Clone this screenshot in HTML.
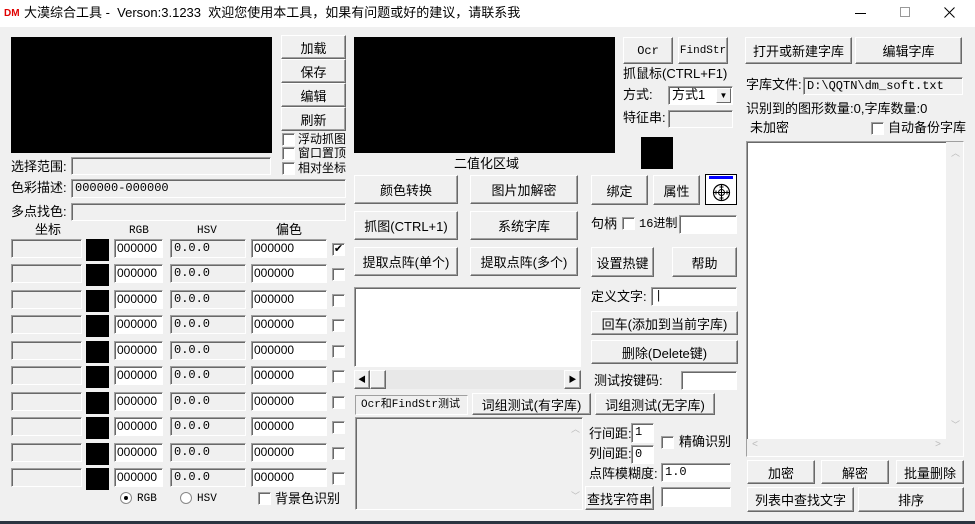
<!DOCTYPE html>
<html><head><meta charset="utf-8">
<style>
*{box-sizing:border-box;margin:0;padding:0}
body{width:975px;height:524px;background:#f0f0f0;position:relative;overflow:hidden;font-family:"Liberation Sans","Noto Sans CJK SC",sans-serif;font-size:12px;color:#000}
.a{position:absolute}
.blk{position:absolute;background:#000}
.btn{position:absolute;background:#f0f0f0;border:1px solid;border-color:#fff #696969 #696969 #fff;box-shadow:inset -1px -1px 0 #a0a0a0;display:flex;align-items:center;justify-content:center;font-size:13px;white-space:nowrap}
.in{position:absolute;background:#fff;border:1px solid;border-color:#a0a0a0 #fff #fff #a0a0a0;box-shadow:inset 1px 1px 0 #696969;font-family:"Liberation Mono","Noto Sans CJK SC",monospace;font-size:12px;line-height:16px;padding-left:3px;white-space:nowrap;overflow:hidden}
.s{font-family:"Liberation Sans",sans-serif;font-size:12px;padding-left:2px}
.ro{background:#f0f0f0}
.cb{position:absolute;width:13px;height:13px;background:#fff;border:1px solid;border-color:#a0a0a0 #fff #fff #a0a0a0;box-shadow:inset 1px 1px 0 #696969}
.t{position:absolute;font-size:13px;white-space:nowrap;line-height:14px}
.m{font-family:"Liberation Mono","Noto Sans CJK SC",monospace;font-size:12px}
</style></head><body>
<div class="a" style="left:0;top:0;width:975px;height:27px;background:#fff"></div>
<div class="t" style="left:4px;top:7px;color:#e00000;font-weight:bold;font-size:10px">DM</div>
<div class="t" style="left:24px;top:6px;font-size:13px">大漠综合工具 -&nbsp; Verson:3.1233&nbsp; 欢迎您使用本工具，如果有问题或好的建议，请联系我</div>
<div class="a" style="left:855px;top:13px;width:11px;height:1px;background:#000"></div>
<div class="a" style="left:900px;top:7px;width:10px;height:10px;border:1px solid #999"></div>
<svg class="a" style="left:944px;top:7px" width="11" height="11" viewBox="0 0 11 11"><path d="M0.5 0.5L10.5 10.5M10.5 0.5L0.5 10.5" stroke="#000" stroke-width="1"/></svg>
<div class="a" style="left:0;top:521px;width:975px;height:3px;background:#2b3440"></div>

<div class="blk" style="left:11px;top:37px;width:261px;height:116px"></div>
<div class="btn" style="left:281px;top:35px;width:65px;height:24px">加载</div>
<div class="btn" style="left:281px;top:59px;width:65px;height:24px">保存</div>
<div class="btn" style="left:281px;top:83px;width:65px;height:24px">编辑</div>
<div class="btn" style="left:281px;top:107px;width:65px;height:24px">刷新</div>
<div class="cb" style="left:282px;top:133px"></div><div class="t" style="left:298px;top:132px;font-size:12px">浮动抓图</div>
<div class="cb" style="left:282px;top:147px"></div><div class="t" style="left:298px;top:146px;font-size:12px">窗口置顶</div>
<div class="cb" style="left:282px;top:162px"></div><div class="t" style="left:298px;top:161px;font-size:12px">相对坐标</div>
<div class="t" style="left:11px;top:160px">选择范围:</div>
<div class="in ro" style="left:71px;top:157px;width:200px;height:18px"></div>
<div class="t" style="left:11px;top:181px">色彩描述:</div>
<div class="in ro" style="left:71px;top:179px;width:275px;height:19px">000000-000000</div>
<div class="t" style="left:11px;top:205px">多点找色:</div>
<div class="in ro" style="left:71px;top:203px;width:275px;height:18px"></div>
<div class="t" style="left:35px;top:223px">坐标</div>
<div class="t m" style="left:129px;top:224px;font-size:11px">RGB</div>
<div class="t m" style="left:197px;top:224px;font-size:11px">HSV</div>
<div class="t" style="left:276px;top:223px">偏色</div>

<div class="in ro" style="left:11px;top:239px;width:71px;height:19px"></div><div class="blk" style="left:86px;top:239px;width:23px;height:22px"></div><div class="in s" style="left:114px;top:239px;width:49px;height:19px">000000</div><div class="in ro" style="left:170px;top:239px;width:76px;height:19px">0.0.0</div><div class="in s" style="left:251px;top:239px;width:76px;height:19px">000000</div><div class="cb" style="left:332px;top:243px;font-size:11px;line-height:11px;text-align:center">✔</div>
<div class="in ro" style="left:11px;top:264px;width:71px;height:19px"></div><div class="blk" style="left:86px;top:264px;width:23px;height:22px"></div><div class="in s" style="left:114px;top:264px;width:49px;height:19px">000000</div><div class="in ro" style="left:170px;top:264px;width:76px;height:19px">0.0.0</div><div class="in s" style="left:251px;top:264px;width:76px;height:19px">000000</div><div class="cb" style="left:332px;top:268px"></div>
<div class="in ro" style="left:11px;top:290px;width:71px;height:19px"></div><div class="blk" style="left:86px;top:290px;width:23px;height:22px"></div><div class="in s" style="left:114px;top:290px;width:49px;height:19px">000000</div><div class="in ro" style="left:170px;top:290px;width:76px;height:19px">0.0.0</div><div class="in s" style="left:251px;top:290px;width:76px;height:19px">000000</div><div class="cb" style="left:332px;top:294px"></div>
<div class="in ro" style="left:11px;top:315px;width:71px;height:19px"></div><div class="blk" style="left:86px;top:315px;width:23px;height:22px"></div><div class="in s" style="left:114px;top:315px;width:49px;height:19px">000000</div><div class="in ro" style="left:170px;top:315px;width:76px;height:19px">0.0.0</div><div class="in s" style="left:251px;top:315px;width:76px;height:19px">000000</div><div class="cb" style="left:332px;top:319px"></div>
<div class="in ro" style="left:11px;top:341px;width:71px;height:19px"></div><div class="blk" style="left:86px;top:341px;width:23px;height:22px"></div><div class="in s" style="left:114px;top:341px;width:49px;height:19px">000000</div><div class="in ro" style="left:170px;top:341px;width:76px;height:19px">0.0.0</div><div class="in s" style="left:251px;top:341px;width:76px;height:19px">000000</div><div class="cb" style="left:332px;top:345px"></div>
<div class="in ro" style="left:11px;top:366px;width:71px;height:19px"></div><div class="blk" style="left:86px;top:366px;width:23px;height:22px"></div><div class="in s" style="left:114px;top:366px;width:49px;height:19px">000000</div><div class="in ro" style="left:170px;top:366px;width:76px;height:19px">0.0.0</div><div class="in s" style="left:251px;top:366px;width:76px;height:19px">000000</div><div class="cb" style="left:332px;top:370px"></div>
<div class="in ro" style="left:11px;top:392px;width:71px;height:19px"></div><div class="blk" style="left:86px;top:392px;width:23px;height:22px"></div><div class="in s" style="left:114px;top:392px;width:49px;height:19px">000000</div><div class="in ro" style="left:170px;top:392px;width:76px;height:19px">0.0.0</div><div class="in s" style="left:251px;top:392px;width:76px;height:19px">000000</div><div class="cb" style="left:332px;top:396px"></div>
<div class="in ro" style="left:11px;top:417px;width:71px;height:19px"></div><div class="blk" style="left:86px;top:417px;width:23px;height:22px"></div><div class="in s" style="left:114px;top:417px;width:49px;height:19px">000000</div><div class="in ro" style="left:170px;top:417px;width:76px;height:19px">0.0.0</div><div class="in s" style="left:251px;top:417px;width:76px;height:19px">000000</div><div class="cb" style="left:332px;top:421px"></div>
<div class="in ro" style="left:11px;top:443px;width:71px;height:19px"></div><div class="blk" style="left:86px;top:443px;width:23px;height:22px"></div><div class="in s" style="left:114px;top:443px;width:49px;height:19px">000000</div><div class="in ro" style="left:170px;top:443px;width:76px;height:19px">0.0.0</div><div class="in s" style="left:251px;top:443px;width:76px;height:19px">000000</div><div class="cb" style="left:332px;top:447px"></div>
<div class="in ro" style="left:11px;top:468px;width:71px;height:19px"></div><div class="blk" style="left:86px;top:468px;width:23px;height:22px"></div><div class="in s" style="left:114px;top:468px;width:49px;height:19px">000000</div><div class="in ro" style="left:170px;top:468px;width:76px;height:19px">0.0.0</div><div class="in s" style="left:251px;top:468px;width:76px;height:19px">000000</div><div class="cb" style="left:332px;top:472px"></div>
<div class="a" style="left:120px;top:492px;width:12px;height:12px;border-radius:50%;background:#fff;border:1px solid #888"><div class="a" style="left:3px;top:3px;width:4px;height:4px;border-radius:50%;background:#000"></div></div>
<div class="t m" style="left:137px;top:492px;font-size:11px">RGB</div>
<div class="a" style="left:180px;top:492px;width:12px;height:12px;border-radius:50%;background:#fff;border:1px solid #888"></div>
<div class="t m" style="left:197px;top:492px;font-size:11px">HSV</div>
<div class="cb" style="left:258px;top:492px"></div><div class="t" style="left:275px;top:492px">背景色识别</div>

<div class="blk" style="left:354px;top:37px;width:261px;height:116px"></div>
<div class="t" style="left:454px;top:157px">二值化区域</div>
<div class="btn" style="left:354px;top:175px;width:104px;height:29px">颜色转换</div>
<div class="btn" style="left:470px;top:175px;width:108px;height:29px">图片加解密</div>
<div class="btn" style="left:354px;top:211px;width:104px;height:29px">抓图(CTRL+1)</div>
<div class="btn" style="left:470px;top:211px;width:108px;height:29px">系统字库</div>
<div class="btn" style="left:354px;top:247px;width:104px;height:29px">提取点阵(单个)</div>
<div class="btn" style="left:470px;top:247px;width:108px;height:29px">提取点阵(多个)</div>
<div class="btn" style="left:623px;top:37px;width:50px;height:27px;font-family:'Liberation Mono',monospace;font-size:12px">Ocr</div>
<div class="btn" style="left:678px;top:37px;width:50px;height:27px;font-family:'Liberation Mono',monospace;font-size:11px">FindStr</div>
<div class="t" style="left:623px;top:67px">抓鼠标(CTRL+F1)</div>
<div class="t" style="left:623px;top:88px">方式:</div>
<div class="in" style="left:668px;top:86px;width:65px;height:19px;font-family:'Liberation Sans','Noto Sans CJK SC',sans-serif;font-size:13px">方式1<div class="a" style="right:1px;top:1px;width:15px;height:15px;background:#f0f0f0;border:1px solid;border-color:#fff #696969 #696969 #fff;font-size:8px;line-height:13px;text-align:center">▼</div></div>
<div class="t" style="left:623px;top:111px">特征串:</div>
<div class="in ro" style="left:668px;top:110px;width:65px;height:18px"></div>
<div class="blk" style="left:641px;top:137px;width:32px;height:32px"></div>
<div class="btn" style="left:591px;top:175px;width:57px;height:30px">绑定</div>
<div class="btn" style="left:653px;top:175px;width:47px;height:30px">属性</div>
<div class="a" style="left:705px;top:174px;width:32px;height:31px;background:#fff;border:1px solid #000">
<div class="a" style="left:3px;top:1px;width:24px;height:3px;background:#0000ff"></div>
<svg class="a" style="left:6px;top:8px" width="19" height="19" viewBox="0 0 19 19"><circle cx="9.5" cy="9.5" r="8" fill="none" stroke="#000" stroke-width="1.2"/><circle cx="9.5" cy="9.5" r="3" fill="none" stroke="#000"/><path d="M1.5 9.5H17.5M9.5 1.5V17.5M4 7.5V11.5M15 7.5V11.5M7.5 4H11.5M7.5 15H11.5" stroke="#000"/></svg></div>
<div class="t" style="left:591px;top:217px">句柄</div>
<div class="cb" style="left:622px;top:217px"></div>
<div class="t m" style="left:639px;top:217px">16进制</div>
<div class="in" style="left:679px;top:215px;width:58px;height:19px"></div>
<div class="btn" style="left:591px;top:247px;width:63px;height:30px">设置热键</div>
<div class="btn" style="left:672px;top:247px;width:65px;height:30px">帮助</div>

<div class="in" style="left:354px;top:287px;width:227px;height:80px"></div>
<div class="a" style="left:354px;top:370px;width:227px;height:19px;background:#e8e8e8"></div>
<div class="btn" style="left:354px;top:370px;width:16px;height:19px;font-size:8px">◀</div>
<div class="btn" style="left:370px;top:370px;width:16px;height:19px"></div>
<div class="btn" style="left:564px;top:370px;width:17px;height:19px;font-size:8px">▶</div>
<div class="t" style="left:591px;top:290px">定义文字:</div>
<div class="in" style="left:651px;top:287px;width:86px;height:19px">|</div>
<div class="btn" style="left:591px;top:311px;width:147px;height:24px">回车(添加到当前字库)</div>
<div class="btn" style="left:591px;top:340px;width:147px;height:24px">删除(Delete键)</div>
<div class="t" style="left:594px;top:374px">测试按键码:</div>
<div class="in" style="left:681px;top:371px;width:56px;height:19px"></div>

<div class="a" style="left:355px;top:395px;width:113px;height:20px;border:1px solid;border-color:#a0a0a0 #fff #fff #a0a0a0;font-family:'Liberation Mono','Noto Sans CJK SC',monospace;font-size:11px;line-height:18px;padding-left:5px">Ocr和FindStr测试</div>
<div class="btn" style="left:472px;top:393px;width:119px;height:22px">词组测试(有字库)</div>
<div class="btn" style="left:595px;top:393px;width:120px;height:22px">词组测试(无字库)</div>
<div class="in ro" style="left:355px;top:417px;width:228px;height:93px"><div class="a" style="right:2px;top:4px;color:#bbb;font-size:9px">︿</div><div class="a" style="right:2px;bottom:4px;color:#bbb;font-size:9px">﹀</div></div>
<div class="t" style="left:589px;top:427px">行间距:</div>
<div class="in" style="left:631px;top:423px;width:23px;height:20px">1</div>
<div class="t" style="left:589px;top:447px">列间距:</div>
<div class="in" style="left:631px;top:445px;width:23px;height:19px">0</div>
<div class="cb" style="left:661px;top:436px"></div><div class="t" style="left:679px;top:435px">精确识别</div>
<div class="t" style="left:589px;top:467px">点阵模糊度:</div>
<div class="in" style="left:661px;top:463px;width:70px;height:19px">1.0</div>
<div class="btn" style="left:585px;top:486px;width:69px;height:24px">查找字符串</div>
<div class="in" style="left:661px;top:487px;width:70px;height:20px"></div>

<div class="btn" style="left:745px;top:37px;width:107px;height:27px">打开或新建字库</div>
<div class="btn" style="left:855px;top:37px;width:107px;height:27px">编辑字库</div>
<div class="t" style="left:746px;top:78px">字库文件:</div>
<div class="in ro" style="left:803px;top:77px;width:160px;height:18px">D:\QQTN\dm_soft.txt</div>
<div class="t" style="left:746px;top:102px">识别到的图形数量:0,字库数量:0</div>
<div class="t" style="left:750px;top:121px">未加密</div>
<div class="cb" style="left:871px;top:122px"></div><div class="t" style="left:888px;top:121px">自动备份字库</div>
<div class="in" style="left:746px;top:141px;width:218px;height:316px">
<div class="a" style="right:0;top:0;width:17px;height:298px;background:#f0f0f0"></div>
<div class="a" style="left:0;bottom:0;width:216px;height:17px;background:#f0f0f0"></div>
<div class="a" style="right:3px;top:4px;color:#bbb;font-size:9px">︿</div>
<div class="a" style="right:3px;bottom:22px;color:#bbb;font-size:9px">﹀</div>
<div class="a" style="left:5px;bottom:2px;color:#bbb;font-size:10px">&lt;</div>
<div class="a" style="right:22px;bottom:2px;color:#bbb;font-size:10px">&gt;</div></div>
<div class="btn" style="left:747px;top:460px;width:68px;height:24px">加密</div>
<div class="btn" style="left:821px;top:460px;width:68px;height:24px">解密</div>
<div class="btn" style="left:896px;top:460px;width:68px;height:24px">批量删除</div>
<div class="btn" style="left:747px;top:487px;width:107px;height:25px">列表中查找文字</div>
<div class="btn" style="left:858px;top:487px;width:106px;height:25px">排序</div>
</body></html>
